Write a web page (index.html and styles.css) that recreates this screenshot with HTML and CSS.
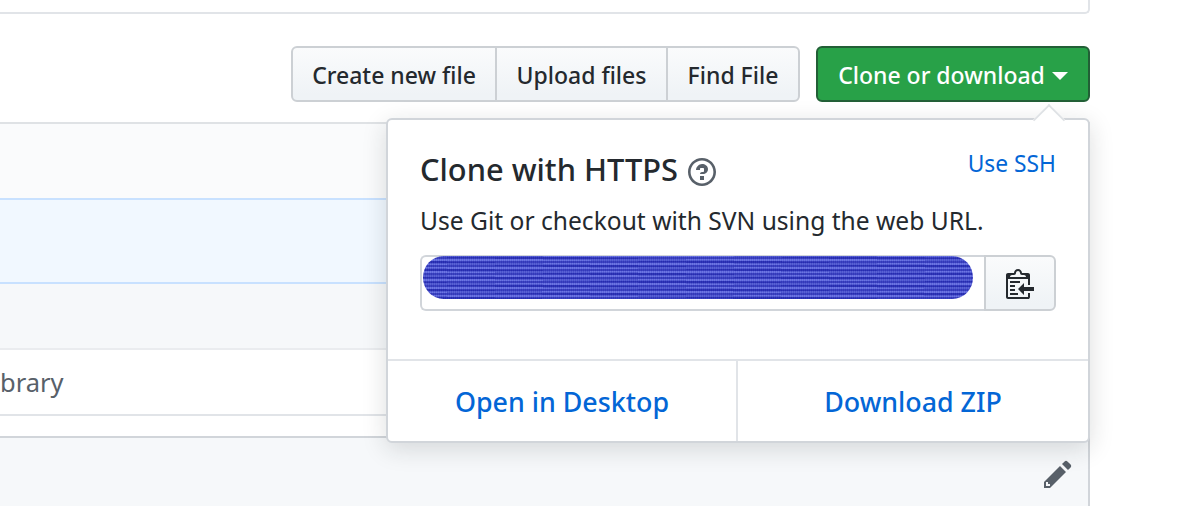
FILE: index.html
```html
<!DOCTYPE html>
<html lang="en">
<head>
<meta charset="utf-8">
<title>Clone or download</title>
<link rel="stylesheet" href="styles.css">
</head>
<body>
<div class="page">
  <div class="top-box"></div>
  <div class="actions">
    <div class="btn-group">
      <a class="btn btn-create">Create new file</a>
      <a class="btn btn-upload">Upload files</a>
      <a class="btn btn-find">Find File</a>
    </div>
    <a class="btn btn-primary">Clone or download <span class="dropdown-caret"></span></a>
  </div>
  <div class="files">
    <div class="row row-head"></div>
    <div class="row row-blue"></div>
    <div class="row row-gray"></div>
    <div class="row row-file"><span class="file-text">brary</span></div>
    <div class="row row-spacer"></div>
  </div>
  <div class="readme">
    <svg class="icon-pencil" viewBox="0 0 14 16"><path fill-rule="evenodd" d="M0 12v3h3l8-8-3-3-8 8zm3 2H1v-2h1v1h1v1zm10.3-9.3L12 6 9 3l1.3-1.3a.996.996 0 0 1 1.41 0l1.59 1.59c.39.39.39 1.02 0 1.41z"/></svg>
  </div>
  <div class="popover">
    <div class="popover-body">
      <div class="popover-head">
        <h4 class="popover-title">Clone with HTTPS
          <svg class="icon-question" viewBox="0 0 14 16"><path fill-rule="evenodd" d="M6 10h2v2H6v-2zm4-3.5C10 8.64 8 9 8 9H6c0-.55.45-1 1-1h.5c.28 0 .5-.22.5-.5v-1c0-.28-.22-.5-.5-.5h-1c-.28 0-.5.22-.5.5V7H4c0-1.5 1.5-3 3-3s3 1 3 2.5zM7 2.3c3.14 0 5.7 2.56 5.7 5.7s-2.56 5.7-5.7 5.7A5.71 5.71 0 0 1 1.3 8c0-3.14 2.56-5.7 5.7-5.7zM7 1C3.14 1 0 4.14 0 8s3.14 7 7 7 7-3.14 7-7-3.14-7-7-7z"/></svg>
        </h4>
        <a class="use-ssh">Use SSH</a>
      </div>
      <p class="popover-desc">Use Git or checkout with SVN using the web URL.</p>
      <div class="input-group">
        <div class="url-field"><div class="scribble"></div></div>
        <button class="copy-btn">
          <svg class="icon-clippy" viewBox="0 0 14 16"><path fill-rule="evenodd" d="M2 13h4v1H2v-1zm5-6H2v1h5V7zm2 3V8l-3 3 3 3v-2h5v-2H9zM4.5 9H2v1h2.5V9zM2 12h2.5v-1H2v1zm9 1h1v2c-.02.28-.11.52-.3.7-.19.18-.42.28-.7.3H1c-.55 0-1-.45-1-1V4c0-.55.45-1 1-1h3c0-1.11.89-2 2-2 1.11 0 2 .89 2 2h3c.55 0 1 .45 1 1v5h-1V6H1v9h10v-2zM2 5h8c0-.55-.45-1-1-1H8c-.55 0-1-.45-1-1s-.45-1-1-1-1 .45-1 1-.45 1-1 1H3c-.55 0-1 .45-1 1z"/></svg>
        </button>
      </div>
    </div>
    <div class="popover-foot">
      <a class="foot-link foot-left">Open in Desktop</a>
      <a class="foot-link">Download ZIP</a>
    </div>
  </div>
</div>
</body>
</html>
```
FILE: styles.css
```css
* { box-sizing: border-box; }
html, body { margin: 0; padding: 0; background: #fff; }
body {
  font-family: "Noto Sans", "Open Sans", "Liberation Sans", sans-serif;
  color: #24292e;
  overflow: hidden;
}
.page { position: relative; width: 1184px; height: 506px; overflow: hidden; }
.top-box {
  width: 1090px; height: 14px;
  border-right: 2px solid #e1e4e8;
  border-bottom: 2px solid #e1e4e8;
  border-bottom-right-radius: 5px;
}
.actions {
  width: 1090px; height: 56px; margin-top: 32px;
  display: flex; justify-content: flex-end; gap: 16px;
}
.btn-group { display: flex; }
.btn {
  display: flex; align-items: center; justify-content: center;
  height: 56px; padding-top: 1px;
  font-size: 23px; font-weight: 500; white-space: nowrap;
  color: #24292e;
  background: linear-gradient(#fafbfc, #eff3f6 90%);
  border: 2px solid #ccd0d4;
}
.btn-create { width: 206px; border-radius: 6px 0 0 6px; }
.btn-upload { width: 173px; margin-left: -2px; }
.btn-find { width: 134px; margin-left: -2px; border-radius: 0 6px 6px 0; }
.btn-primary {
  width: 274px; gap: 7px;
  color: #fff;
  background: #28a148;
  border-color: #225f36;
  border-radius: 6px;
}
.dropdown-caret {
  width: 0; height: 0; margin-top: 3px;
  border-style: solid;
  border-width: 8px 8px 0;
  border-color: #fff transparent transparent;
}
.files {
  width: 1090px; margin-top: 20px;
  border-top: 2px solid #dfe2e5;
  border-right: 2px solid #dfe2e5;
}
.row-head { height: 74px; background: #fafbfc; }
.row-blue { height: 86px; background: #f1f8ff; border-top: 2px solid #c8e1ff; border-bottom: 2px solid #c8e1ff; }
.row-gray { height: 66px; background: #f6f8fa; border-bottom: 2px solid #eaecef; }
.row-file {
  height: 66px; display: flex; align-items: center;
  border-bottom: 2px solid #e1e4e8;
}
.file-text { font-size: 25.5px; color: #586069; }
.row-spacer { height: 22px; border-bottom: 2px solid #d1d5da; }
.readme {
  width: 1090px; height: 70px; position: relative;
  display: flex; justify-content: flex-end; align-items: flex-start;
  padding: 20px 16px 0 0;
  background: #f6f8fa;
  border-right: 2px solid #d1d5da;
}
.icon-pencil { width: 28px; height: 32px; fill: #586069; }
.popover {
  position: absolute; left: 386px; top: 118px;
  width: 704px; height: 325px;
  background: #fff;
  border: 2px solid #d1d5da;
  border-radius: 6px;
  box-shadow: 0 6px 24px rgba(27, 31, 35, 0.15);
}
.popover::before {
  content: ""; position: absolute; right: 27px; top: -12px;
  width: 22px; height: 22px;
  background: #fff;
  border-top: 2px solid #dfe2e5;
  border-left: 2px solid #dfe2e5;
  transform: rotate(45deg) scale(0.95);
}
.popover-body { position: relative; height: 241px; padding: 29px 32px 0 32px; border-bottom: 2px solid #e1e4e8; }
.popover-head { display: flex; justify-content: space-between; align-items: flex-start; }
.popover-title {
  display: flex; align-items: center; gap: 10px;
  margin: 0; font-size: 30.8px; line-height: 40px; font-weight: 500; color: #24292e;
}
.icon-question { width: 28px; height: 32px; fill: #586069; margin-top: 6px; }
.use-ssh { font-size: 22.8px; line-height: 30px; color: #0366d6; }
.popover-desc { margin: 17px 0 0; font-size: 24.6px; line-height: 30px; color: #24292e; }
.input-group { display: flex; height: 56px; margin-top: 19px; }
.url-field {
  flex: 1; padding: 0 0 0 1px;
  display: flex; align-items: flex-start;
  border: 2px solid #d1d5da; border-right: 0;
  border-radius: 6px 0 0 6px;
}
.scribble {
  width: 550px; height: 43px; margin-top: -1px;
  border-radius: 21px / 22px;
  background-color: #4450d4;
  background-image:
    repeating-linear-gradient(0deg, rgba(30, 34, 170, 0.55) 0 2px, rgba(120, 128, 235, 0.35) 2px 4px),
    repeating-linear-gradient(1.2deg, rgba(20, 24, 150, 0.25) 0 3px, rgba(150, 158, 245, 0.2) 3px 7px),
    repeating-linear-gradient(90deg, rgba(0, 0, 120, 0.18) 0 1px, rgba(255, 255, 255, 0.12) 1px 2px);
}
.copy-btn {
  width: 72px; padding: 0;
  display: flex; align-items: center; justify-content: center;
  background: linear-gradient(#fafbfc, #eff3f6 90%);
  border: 2px solid #ccd0d4;
  border-radius: 0 6px 6px 0;
}
.icon-clippy { width: 28px; height: 32px; fill: #24292e; margin: -1px 0 0 -1px; }
.popover-foot { display: flex; height: 80px; }
.foot-link {
  flex: 1; display: flex; align-items: center; justify-content: center;
  font-size: 26.8px; font-weight: 500; color: #0366d6;
}
.foot-left { flex: 0 0 350px; border-right: 2px solid #e1e4e8; }
```
